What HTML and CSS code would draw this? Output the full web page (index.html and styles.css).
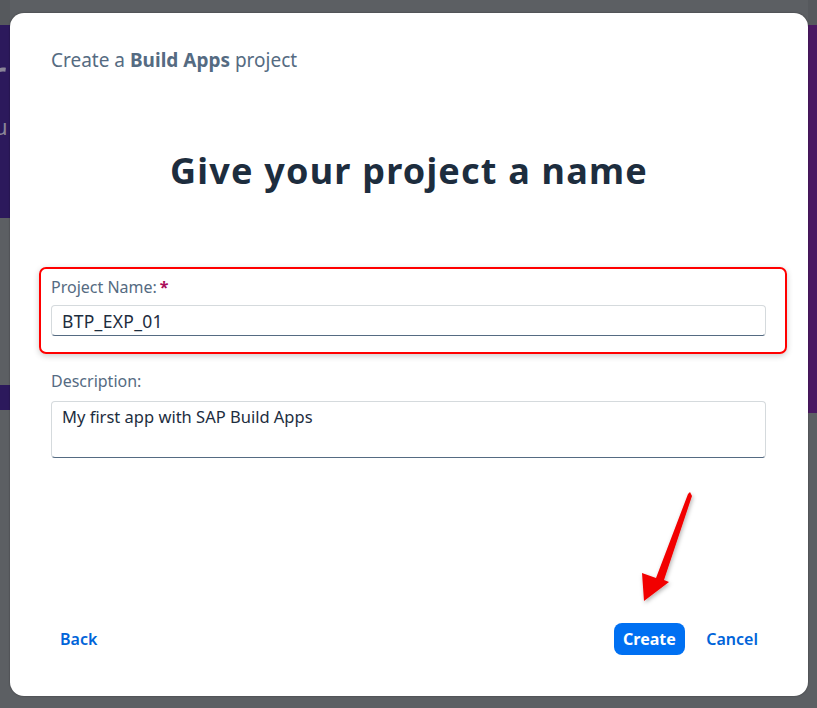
FILE: index.html
```html
<!DOCTYPE html>
<html>
<head>
<meta charset="utf-8">
<link rel="stylesheet" href="styles.css">
</head>
<body>
<div class="backdrop">
  <div class="strip strip-left">
    <div class="band gray top"></div>
    <div class="band purple-l hero"><span class="ghost big">r</span><span class="ghost small">u</span></div>
    <div class="band gray mid"></div>
    <div class="band purple-l thin"></div>
    <div class="band gray fill"></div>
  </div>
  <div class="strip strip-center"></div>
  <div class="strip strip-right">
    <div class="band gray top"></div>
    <div class="band purple-r tall"></div>
    <div class="band gray fill"></div>
  </div>
</div>

<div class="dialog">
  <div class="dialog-head">Create a <b>Build Apps</b> project</div>
  <h1 class="title">Give your project a name</h1>
  <div class="form">
    <div class="field highlighted">
      <label class="label">Project Name:<span class="req">*</span></label>
      <div class="input">BTP_EXP_01</div>
    </div>
    <div class="field plain">
      <label class="label">Description:</label>
      <div class="input textarea">My first app with SAP Build Apps</div>
    </div>
  </div>
  <div class="footer">
    <a class="link">Back</a>
    <div class="actions">
      <button class="btn-primary">Create</button>
      <a class="link">Cancel</a>
    </div>
  </div>
</div>

<svg class="arrow" width="817" height="708" viewBox="0 0 817 708">
  <defs>
    <filter id="sh" x="-50%" y="-50%" width="200%" height="200%">
      <feDropShadow dx="1" dy="2" stdDeviation="2" flood-color="#000" flood-opacity="0.3"/>
    </filter>
  </defs>
  <polygon points="690,492 692,496 664,580 669,582 644,601 642,573 656,578 688,494" fill="#f20000" filter="url(#sh)"/>
</svg>
</body>
</html>
```

FILE: styles.css
```css
html, body {
  margin: 0;
  padding: 0;
}
body {
  width: 817px;
  height: 708px;
  overflow: hidden;
  background: #5c5f63;
  font-family: "Noto Sans", "Open Sans", sans-serif;
  position: relative;
}
.backdrop {
  display: grid;
  grid-template-columns: 10px 1fr 9px;
  height: 708px;
}
.strip {
  display: flex;
  flex-direction: column;
  overflow: hidden;
}
.band.gray { background: #5c5f63; }
.band.top { height: 25px; background: #56595d; }
.band.purple-l { background: #2c195c; }
.band.purple-r { background: #4a1862; }
.band.hero {
  height: 193px;
  display: flex;
  flex-direction: column;
}
.ghost {
  color: #8a8598;
  line-height: 1;
  margin-left: -14px;
}
.ghost.big { font-size: 50px; line-height: 50px; margin-top: 26px; }
.ghost.small { font-size: 22px; line-height: 22px; margin-top: 14px; margin-left: -6px; }
.band.mid { height: 167px; }
.band.thin { height: 25px; }
.band.tall { height: 388px; }
.band.fill { flex: 1; }
.strip-center { background: #5c5f63; }

.dialog {
  position: absolute;
  left: 10px;
  top: 13px;
  width: 798px;
  height: 683px;
  background: #fff;
  border-radius: 14px;
  box-shadow: 0 0 2px rgba(0,0,0,0.4);
  box-sizing: border-box;
  padding: 34px 41px 0 41px;
  display: flex;
  flex-direction: column;
}
.dialog-head {
  font-size: 19px;
  color: #556b82;
  line-height: 26px;
}
.dialog-head b { font-weight: 700; }
.title {
  margin: 72px 0 0 0;
  text-align: center;
  font-family: "Noto Sans", sans-serif;
  font-weight: 700;
  font-size: 36px;
  line-height: 52px;
  color: #1d2d3e;
  letter-spacing: 1.2px;
}
.form {
  margin-top: 70px;
  display: flex;
  flex-direction: column;
  margin-left: -12px;
  margin-right: -20px;
}
.field.highlighted {
  border: 2px solid #f00;
  border-radius: 7px;
  padding: 7px 19px 16px 10px;
  box-shadow: 0 2px 6px rgba(0,0,0,0.2);
}
.field.plain {
  padding: 16px 21px 0 12px;
}
.label {
  display: block;
  font-size: 16px;
  line-height: 22px;
  color: #556b82;
  margin-bottom: 7px;
}
.plain .label { margin-bottom: 9px; }
.req {
  color: #aa0e5a;
  font-weight: 700;
  margin-left: 3px;
}
.input {
  border: 1px solid #d5dadd;
  border-bottom-color: #556b82;
  border-radius: 4px;
  height: 31px;
  box-sizing: border-box;
  padding: 3px 10px;
  font-size: 16.5px;
  line-height: 24px;
  color: #1d2d3e;
}
.highlighted .input { font-size: 17.5px; letter-spacing: 0.3px; }
.input.textarea {
  height: 57px;
  padding-top: 3px;
}
.footer {
  margin-top: auto;
  margin-bottom: 41px;
  display: flex;
  justify-content: space-between;
  align-items: center;
  padding-left: 9px;
  padding-right: 9px;
}
.actions {
  display: flex;
  align-items: center;
  gap: 21px;
}
.link {
  color: #0064d9;
  font-size: 16px;
  font-weight: 600;
}
.btn-primary {
  background: #0070f2;
  color: #fff;
  border: none;
  border-radius: 8px;
  height: 32px;
  padding: 0 9.5px;
  font-family: "Noto Sans", sans-serif;
  font-size: 16px;
  font-weight: 700;
}
.arrow {
  position: absolute;
  left: 0;
  top: 0;
  pointer-events: none;
}
```
